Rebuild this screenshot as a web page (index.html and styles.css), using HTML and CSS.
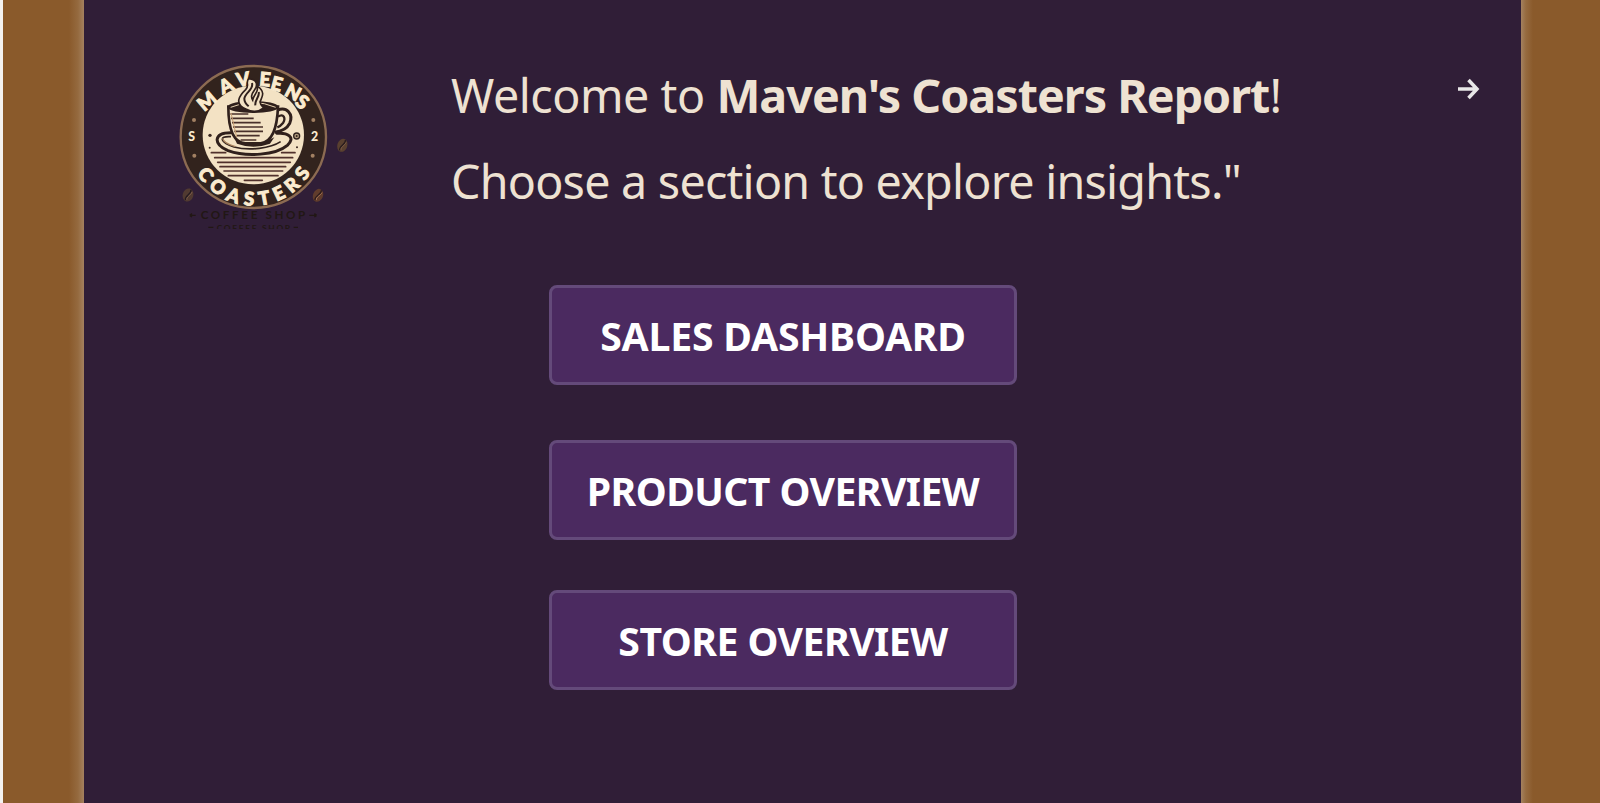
FILE: index.html
```html
<!DOCTYPE html>
<html lang="en">
<head>
<meta charset="utf-8">
<title>Maven's Coasters Report</title>
<link rel="stylesheet" href="styles.css">
</head>
<body>
<div class="report">
  <div class="side side-left"></div>
  <main class="panel">
    <header class="header">
      <svg class="logo" viewBox="0 0 600 555" role="img" aria-label="Maven's Coasters logo">
        <ellipse cx="265" cy="246" rx="218" ry="213" fill="#32231d" stroke="#8c6b52" stroke-width="7"/>
        <ellipse cx="265" cy="240" rx="152" ry="148" fill="#f3e2c4"/>
        <g class="logo-letters" font-size="57">
          <text transform="translate(126 138) rotate(-40)" y="20">M</text>
          <text transform="translate(183 92) rotate(-25)" y="20">A</text>
          <text transform="translate(234 73) rotate(-9)" y="20">V</text>
          <text transform="translate(300 73) rotate(5)" y="20">E</text>
          <text transform="translate(335 87) rotate(15)" y="20">E</text>
          <text transform="translate(384 112) rotate(28)" y="20">N</text>
          <text transform="translate(412 141) rotate(38)" y="20">S</text>
        </g>
        <path id="arc" d="M86 337A198 198 0 0 0 446 335" fill="none"/>
        <text class="logo-letters arc-text" font-size="56"><textPath href="#arc" startOffset="50%" textLength="410" lengthAdjust="spacing">COASTERS</textPath></text>
        <g class="logo-letters small" font-size="37"><text x="80" y="257">S</text><text x="449" y="258">2</text></g>
        <g fill="#a28062"><circle cx="87" cy="195" r="6"/><circle cx="88" cy="302" r="6"/><circle cx="445" cy="195" r="6"/><circle cx="443" cy="302" r="6"/></g>
        <g fill="#392620"><circle cx="135" cy="241" r="5"/><circle cx="134" cy="278" r="3"/><circle cx="396" cy="277" r="3"/></g>
        <circle cx="395" cy="243" r="9" fill="#b09a7c" stroke="#30221c" stroke-width="4"/><circle cx="395" cy="243" r="3" fill="#30221c"/>
        <g stroke="#50302b" stroke-width="5" stroke-linecap="round">
          <path d="M139 293H182M350 293H390M149 308H383M158 322H376M165 335H362M177 348H353M190 362H339M238 376H292"/>
        </g>
        <!-- saucer -->
        <ellipse cx="267" cy="262" rx="111" ry="36" fill="#f3e2c4"/>
        <path d="M197 233C146 233 143 267 189 287C246 307 333 300 367 271C394 246 366 232 336 235" fill="none" stroke="#30201c" stroke-width="9" stroke-linecap="round"/>
        <path d="M198 245C157 242 168 265 207 276C253 288 317 280 347 260" fill="none" stroke="#30201c" stroke-width="5"/>
        <path d="M173 250C175 262 194 270 211 275" fill="none" stroke="#a9845f" stroke-width="4"/>
        <path d="M207 247Q265 285 328 247L315 266Q265 284 216 266Z" fill="#30201c"/>
        <!-- cup -->
        <path d="M337 166C365 153 386 178 374 205C364 225 343 230 329 232" fill="none" stroke="#30201c" stroke-width="9"/>
        <path d="M339 185C356 173 363 190 354 204Q347 213 337 217" fill="none" stroke="#30201c" stroke-width="7"/>
        <path d="M190 155C190 210 199 262 241 265H287C326 261 337 210 339 155Z" fill="#f3e2c4" stroke="#30201c" stroke-width="8"/>
        <ellipse cx="264" cy="156" rx="73" ry="15" fill="#30201c" stroke="#30201c" stroke-width="6"/>
        <path d="M197 157Q264 128 332 157" fill="none" stroke="#ead5b3" stroke-width="3"/>
        <path d="M196 177H250M198 190H266M201 203H287M204 216H294M208 229H294M215 242H284M227 255H274" fill="none" stroke="#49302a" stroke-width="5"/>
        <path d="M198 174L215 246" stroke="#c69d70" stroke-width="3"/>
        <!-- steam -->
        <path d="M244 163C205 147 224 121 242 104C255 91 240 84 251 71C279 73 278 93 268 106C258 120 258 126 263 135C266 119 280 113 278 94C305 113 288 130 285 141Q286 151 296 159C279 173 258 171 244 163Z" fill="#f3e2c4" stroke="#30201c" stroke-width="5"/>
        <path d="M261 84C267 105 240 112 238 131Q238 143 251 154M281 111C285 126 269 133 271 151" fill="none" stroke="#30201c" stroke-width="6"/>
        <g>
          <g transform="translate(69 420) rotate(16)"><ellipse rx="16" ry="20" fill="#513a31"/><path d="M4-18C11-5-10 3-3 17" fill="none" stroke="#241a20" stroke-width="4"/><path d="M9-12C10-3-5 8 1 15" fill="none" stroke="#8a6851" stroke-width="2"/></g>
          <g transform="translate(459 421) rotate(22)"><ellipse rx="15" ry="20" fill="#603c2c"/><path d="M4-18C10-5-9 3-3 17" fill="none" stroke="#2b1b1c" stroke-width="4"/><path d="M8-12C8-3-5 8 1 15" fill="none" stroke="#bd8763" stroke-width="2"/></g>
          <g transform="translate(532 271) rotate(18)"><ellipse rx="15" ry="20" fill="#59402f"/><path d="M4-18C10-5-9 3-3 17" fill="none" stroke="#291d1e" stroke-width="4"/><path d="M8-12C8-3-5 8 1 15" fill="none" stroke="#8d684e" stroke-width="2"/></g>
        </g>
        <g class="logo-caption">
          <text x="107" y="493" font-size="35" textLength="314">COFFEE SHOP</text>
          <path d="M74 481H92M74 481l7-5M74 481l7 5M433 481H455M455 481l-7-5M455 481l-7 5M130 517H145M386 517H399"/>
          <svg x="150" y="505" width="230" height="17" viewBox="0 0 230 17"><text x="5" y="24" font-size="25" textLength="220">COFFEE SHOP</text></svg>
        </g>
      </svg>
      <h1 class="welcome">
        <span class="line"><span class="greeting">Welcome to </span><b>Maven's Coasters Report</b>!</span>
        <span class="line prompt">Choose a section to explore insights."</span>
      </h1>
      <svg class="next" viewBox="0 0 22 22" aria-label="Next"><path d="M0 11H18M10.5 2L19 11L10.5 20" fill="none" stroke="#e8e7e8" stroke-width="3.5"/></svg>
    </header>
    <nav class="menu">
      <button class="nav-button sales">SALES DASHBOARD</button>
      <button class="nav-button product">PRODUCT OVERVIEW</button>
      <button class="nav-button store">STORE OVERVIEW</button>
    </nav>
  </main>
  <div class="side side-right"></div>
</div>
</body>
</html>
```
FILE: styles.css
```css
* { box-sizing: border-box; }
body { margin: 0; background: #f3f2f1; font-family: "Noto Sans", "Open Sans", sans-serif; }
.report { display: flex; height: 803px; padding-left: 3px; overflow: hidden; }
.side { background: #8a5a2b; }
.side-left { width: 81px; background: linear-gradient(to left, #a4815f, #956a3f 6px, #8a5a2b 15px); }
.side-right { width: 79px; background: linear-gradient(to right, #a4815f, #956a3f 5px, #8a5a2b 12px); }
.panel { width: 1437px; background: #301e37; }
.header { display: flex; align-items: flex-start; height: 285px; padding: 55px 41px 0 81px; }
.logo { flex: none; width: 200px; height: 185px; }
.logo-letters { fill: #fbebcf; stroke: #fbebcf; stroke-width: 3px; font-family: Lato, sans-serif; font-weight: 900; text-anchor: middle; }
.logo-letters.small { stroke-width: 0; }
.logo-caption { fill: #211714; font-family: Lato, sans-serif; font-weight: 700; }
.logo-caption path { fill: none; stroke: #211714; stroke-width: 4; }
.welcome { flex: none; width: 900px; margin: -3px 0 0 86px; color: #eee2d2; font-size: 46.6px; font-weight: 400; line-height: 86px; white-space: nowrap; }
.line { display: block; }
.greeting { letter-spacing: -0.45px; }
.welcome b { font-weight: 700; letter-spacing: -0.97px; }
.prompt { letter-spacing: -0.75px; }
.next { width: 22px; height: 22px; margin: 23px 0 0 auto; }
.menu { display: flex; flex-direction: column; align-items: flex-start; padding-left: 465px; }
.nav-button { display: flex; align-items: center; justify-content: center; width: 468px; height: 100px; margin: 0; padding: 1px 0 0; border: 3px solid #644a7a; border-radius: 8px; background: #4b2a60; color: #fff; font: 700 39.2px "Noto Sans", sans-serif; white-space: nowrap; }
.sales { letter-spacing: -0.2px; }
.product { margin-top: 55px; letter-spacing: -0.58px; }
.store { margin-top: 50px; letter-spacing: -0.52px; }
```
